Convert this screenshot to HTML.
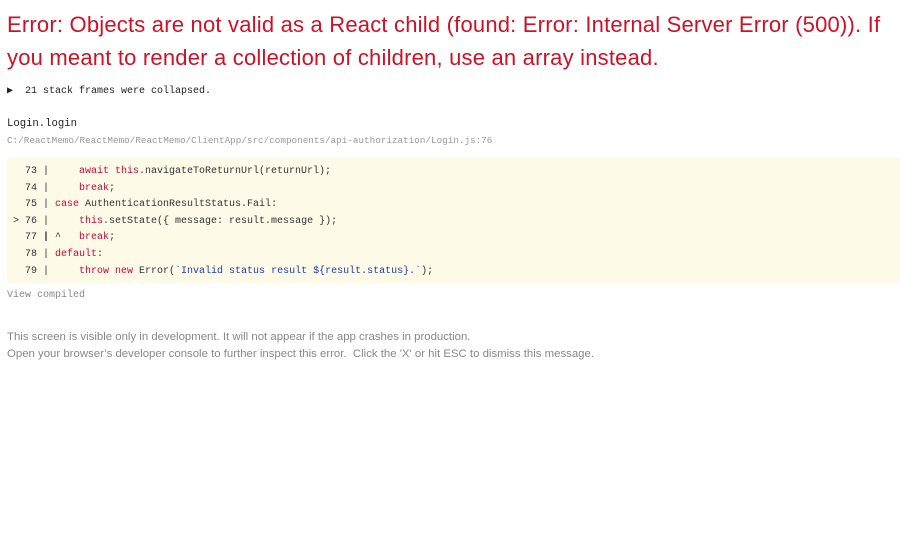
<!DOCTYPE html>
<html><head><meta charset="utf-8"><style>
body{margin:0;background:#fff;width:900px;height:553px;overflow:hidden;position:relative;font-family:"Liberation Sans",sans-serif}
.h{position:absolute;left:7px;top:8px;width:885px;color:#ce1126;font-size:22px;line-height:33px;margin:0;font-weight:normal;letter-spacing:0.2px}
.m{font-family:"Liberation Mono",monospace;font-size:10px;position:absolute;white-space:pre}
.code{position:absolute;left:7px;top:157px;width:893px;height:126px;background:#fdfae8;border-radius:3px}
.r{color:#c4083b}.b{color:#1d3da8}
.f{position:absolute;left:7px;font-size:11.4px;color:#888;white-space:pre}
</style></head><body>
<div class="h">Error: Objects are not valid as a React child (found: Error: Internal Server Error (500)). If you meant to render a collection of children, use an array instead.</div>
<div class="m" style="left:7px;top:85px;color:#222">▶  21 stack frames were collapsed.</div>
<div class="m" style="left:7px;top:118px;color:#222;font-size:10.6px">Login.login</div>
<div class="m" style="left:7px;top:135px;color:#999;font-size:9.3px">C:/ReactMemo/ReactMemo/ReactMemo/ClientApp/src/components/api-authorization/Login.js:76</div>
<div class="code"></div>
<div class="m" style="left:13px;top:164px;line-height:16.6px;color:#333">  73 |     <span class="r">await this</span>.navigateToReturnUrl(returnUrl);
  74 |     <span class="r">break</span>;
  75 | <span class="r">case</span> AuthenticationResultStatus.Fail:
<span>&gt; 76 |     <span class="r">this</span>.setState({ message: result.message });</span>
  77 <b>|</b> ^   <span class="r">break</span>;
  78 | <span class="r">default</span>:
  79 |     <span class="r">throw new</span> Error(<span class="b">`Invalid status result ${result.status}.`</span>);</div>
<div class="m" style="left:7px;top:290px;color:#888">View compiled</div>
<div class="f" style="top:331px">This screen is visible only in development. It will not appear if the app crashes in production.</div>
<div class="f" style="top:348px">Open your browser’s developer console to further inspect this error.  Click the 'X' or hit ESC to dismiss this message.</div>
</body></html>
